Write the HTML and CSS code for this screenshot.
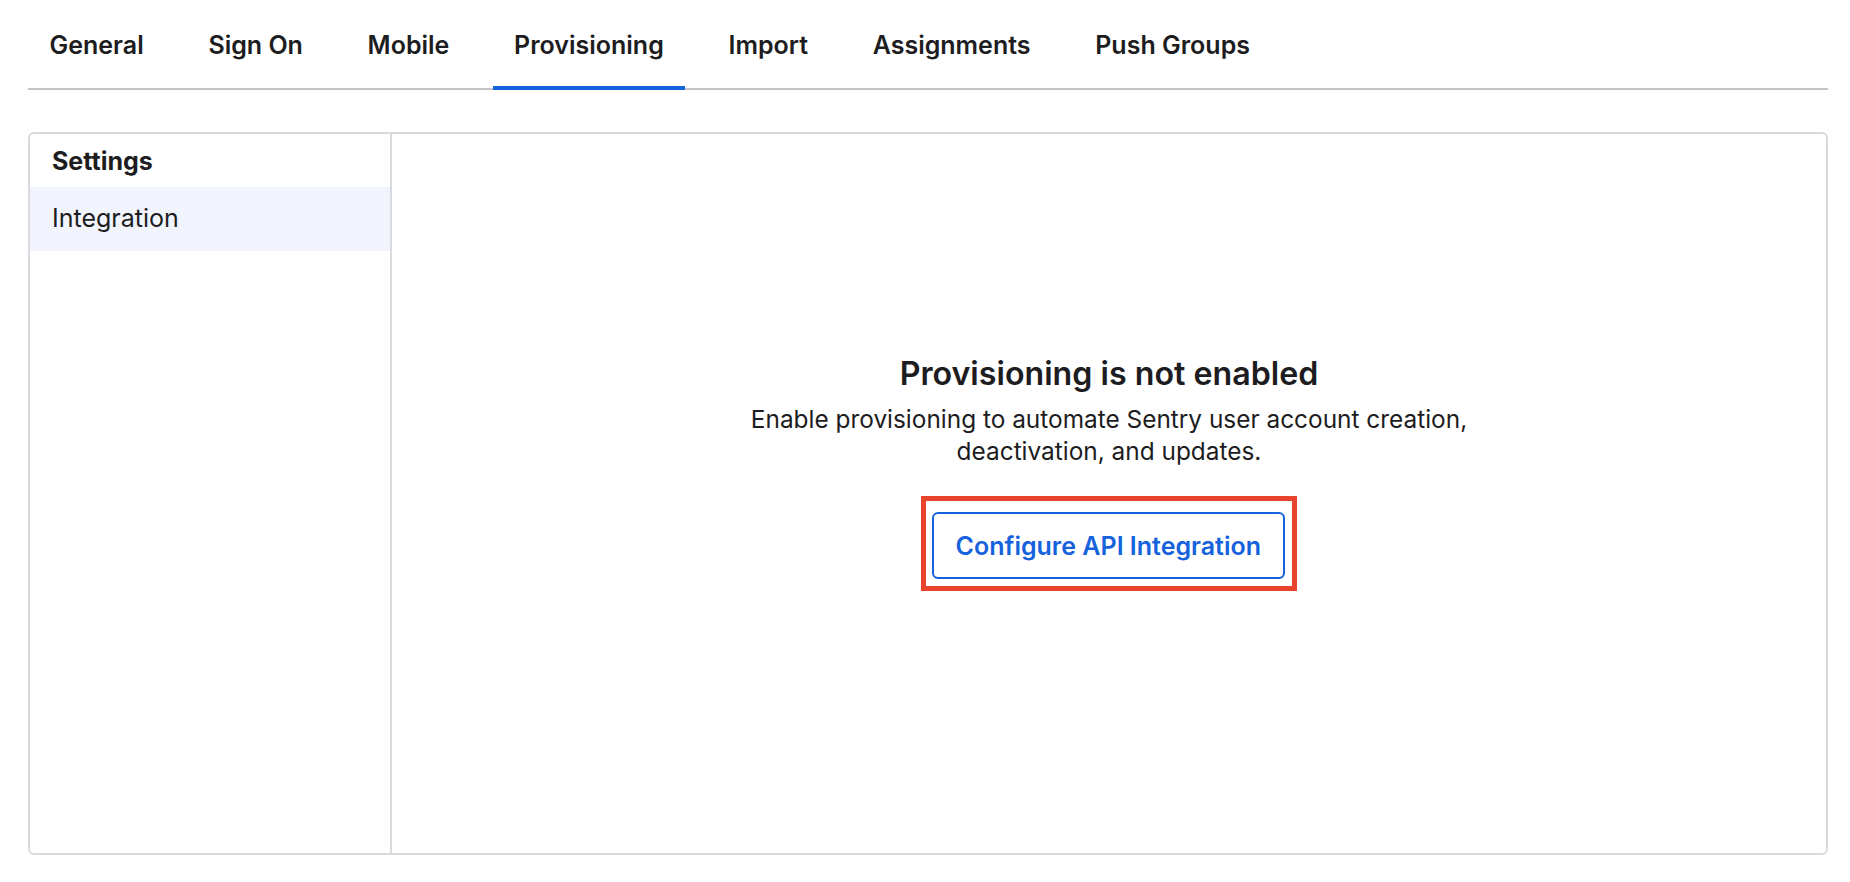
FILE: index.html
```html
<!DOCTYPE html>
<html lang="en">
<head>
<meta charset="utf-8">
<title>Provisioning</title>
<link rel="stylesheet" href="styles.css">
</head>
<body>
<div class="page">
  <nav class="tabs">
    <a class="tab">General</a>
    <a class="tab">Sign On</a>
    <a class="tab">Mobile</a>
    <a class="tab active">Provisioning</a>
    <a class="tab">Import</a>
    <a class="tab">Assignments</a>
    <a class="tab">Push Groups</a>
  </nav>
  <section class="panel">
    <aside class="sidebar">
      <div class="side-title">Settings</div>
      <div class="side-item selected">Integration</div>
    </aside>
    <main class="main">
      <h2 class="heading">Provisioning is not enabled</h2>
      <p class="desc">Enable provisioning to automate Sentry user account creation, deactivation, and updates.</p>
      <div class="highlight">
        <button class="btn">Configure API Integration</button>
      </div>
    </main>
  </section>
</div>
</body>
</html>
```

FILE: styles.css
```css
* { box-sizing: border-box; }
html, body { margin: 0; padding: 0; background: #ffffff; }
body {
  font-family: Inter, "Noto Sans", "Liberation Sans", sans-serif;
  color: #1d1d21;
}
.page {
  padding: 0 22px 0 28px;
}
.tabs {
  display: flex;
  gap: 21.7px;
  border-bottom: 2px solid #c3c3c9;
}
.tab {
  display: block;
  padding: 30px 21.5px 26px;
  font-size: 25px;
  line-height: 30px;
  font-weight: 600;
  color: #1d1d21;
  border-bottom: 4px solid transparent;
  margin-bottom: -2px;
  white-space: nowrap;
}
.tab.active {
  border-bottom-color: #1662dd;
}
.panel {
  margin-top: 42px;
  height: 723px;
  display: flex;
  border: 2px solid #dadade;
  border-radius: 6px;
  overflow: hidden;
}
.sidebar {
  width: 362px;
  flex: none;
  border-right: 2px solid #dadade;
}
.side-title {
  padding: 12px 22px 11px;
  font-size: 25px;
  line-height: 30px;
  font-weight: 700;
}
.side-item {
  padding: 16px 22px 18px;
  font-size: 25px;
  line-height: 30px;
  font-weight: 400;
}
.side-item.selected {
  background: #f1f4fd;
}
.main {
  flex: 1;
  display: flex;
  flex-direction: column;
  align-items: center;
  padding-top: 220px;
}
.heading {
  margin: 0;
  font-size: 32.2px;
  line-height: 40px;
  font-weight: 600;
}
.desc {
  margin: 10px 0 0;
  max-width: 740px;
  text-align: center;
  font-size: 24.4px;
  line-height: 31.5px;
  font-weight: 400;
}
.highlight {
  margin-top: 29px;
  border: 5px solid #e8432b;
  padding: 11px 7px 7px 5.6px;
}
.btn {
  display: block;
  height: 67px;
  width: 353px;
  border: 2px solid #1662dd;
  border-radius: 6px;
  background: #ffffff;
  color: #1662dd;
  font-family: inherit;
  font-size: 25px;
  font-weight: 600;
  padding: 0;
}
```
